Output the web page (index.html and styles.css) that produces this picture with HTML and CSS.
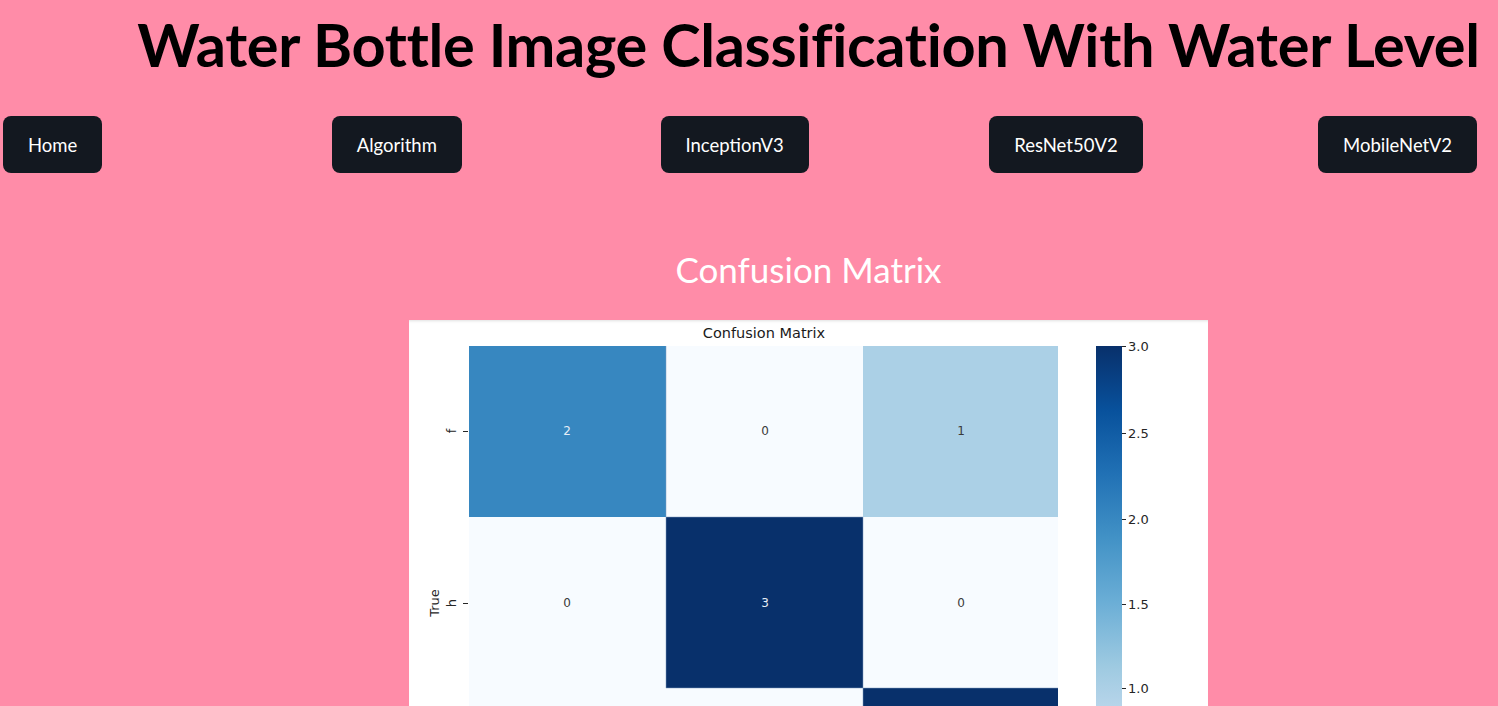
FILE: index.html
```html
<!DOCTYPE html>
<html lang="en">
<head>
<meta charset="utf-8">
<title>Water Bottle Image Classification With Water Level</title>
<link rel="stylesheet" href="styles.css">
</head>
<body>
<main class="app">
  <h1 class="title">Water Bottle Image Classification With Water Level</h1>
  <nav class="nav">
    <div class="nav-col"><button class="btn">Home</button></div>
    <div class="nav-col"><button class="btn">Algorithm</button></div>
    <div class="nav-col"><button class="btn">InceptionV3</button></div>
    <div class="nav-col"><button class="btn">ResNet50V2</button></div>
    <div class="nav-col"><button class="btn">MobileNetV2</button></div>
  </nav>
  <section class="content">
    <h2 class="section">Confusion Matrix</h2>
    <figure class="figure">
      <svg class="plot" width="799" height="386" viewBox="0 0 799 386" xmlns="http://www.w3.org/2000/svg">
        <defs>
          <linearGradient id="blues" x1="0" y1="1" x2="0" y2="0">
            <stop offset="0" stop-color="#f7fbff"/>
            <stop offset="0.125" stop-color="#deebf7"/>
            <stop offset="0.25" stop-color="#c6dbef"/>
            <stop offset="0.375" stop-color="#9ecae1"/>
            <stop offset="0.5" stop-color="#6baed6"/>
            <stop offset="0.625" stop-color="#4292c6"/>
            <stop offset="0.75" stop-color="#2171b5"/>
            <stop offset="0.875" stop-color="#08519c"/>
            <stop offset="1" stop-color="#08306b"/>
          </linearGradient>
        </defs>
        <text class="plot-title" x="355" y="18" text-anchor="middle">Confusion Matrix</text>
        <g class="cells">
          <rect x="60" y="26" width="197" height="171" fill="#3787c0"/>
          <rect x="257" y="26" width="197" height="171" fill="#f7fbff"/>
          <rect x="454" y="26" width="195" height="171" fill="#abd0e6"/>
          <rect x="60" y="197" width="197" height="171" fill="#f7fbff"/>
          <rect x="257" y="197" width="197" height="171" fill="#08306b"/>
          <rect x="454" y="197" width="195" height="171" fill="#f7fbff"/>
          <rect x="60" y="368" width="197" height="171" fill="#f7fbff"/>
          <rect x="257" y="368" width="197" height="171" fill="#f7fbff"/>
          <rect x="454" y="368" width="195" height="171" fill="#08306b"/>
        </g>
        <g class="cell-lines" stroke="#7f9cc0" stroke-width="1" stroke-opacity="0.5">
          <line x1="257" y1="197" x2="257" y2="368"/>
          <line x1="257" y1="197" x2="454" y2="197"/>
          <line x1="257" y1="368" x2="454" y2="368"/>
          <line x1="454" y1="197" x2="454" y2="368"/>
          <line x1="454" y1="368" x2="649" y2="368"/>
          <line x1="454" y1="368" x2="454" y2="539"/>
          <line x1="257" y1="26" x2="257" y2="197"/>
        </g>
        <g class="annot">
          <text x="158" y="115" class="on-dark">2</text>
          <text x="356" y="115" class="on-light">0</text>
          <text x="552" y="115" class="on-light">1</text>
          <text x="158" y="287" class="on-light">0</text>
          <text x="356" y="287" class="on-dark">3</text>
          <text x="552" y="287" class="on-light">0</text>
        </g>
        <g class="ticks" stroke="#262626" stroke-width="1">
          <line x1="54" y1="111.5" x2="59" y2="111.5"/>
          <line x1="54" y1="283.5" x2="59" y2="283.5"/>
          <line x1="713" y1="26.5" x2="717" y2="26.5"/>
          <line x1="713" y1="113.5" x2="717" y2="113.5"/>
          <line x1="713" y1="199.5" x2="717" y2="199.5"/>
          <line x1="713" y1="284.5" x2="717" y2="284.5"/>
          <line x1="713" y1="368.5" x2="717" y2="368.5"/>
        </g>
        <text class="tick-label" transform="translate(47 111) rotate(-90)" text-anchor="middle">f</text>
        <text class="tick-label" transform="translate(47 283) rotate(-90)" text-anchor="middle">h</text>
        <text class="axis-label" transform="translate(30 283) rotate(-90)" text-anchor="middle">True</text>
        <rect x="687" y="26" width="26" height="513" fill="url(#blues)"/>
        <g class="cbar-labels">
          <text x="719" y="31">3.0</text>
          <text x="719" y="118">2.5</text>
          <text x="719" y="204">2.0</text>
          <text x="719" y="289">1.5</text>
          <text x="719" y="373">1.0</text>
        </g>
      </svg>
    </figure>
  </section>
</main>
</body>
</html>
```

FILE: styles.css
```css
html, body {
  margin: 0;
  padding: 0;
}

body {
  background: #ff8ca8;
  overflow: hidden;
  font-family: "Lato", "Noto Sans", sans-serif;
}

.app {
  margin-left: 3px;
  display: flex;
  flex-direction: column;
}

.title {
  margin: 6px 0 0 0;
  padding-left: 116px;
  text-align: center;
  font-size: 59.5px;
  line-height: 76px;
  font-weight: 700;
  color: #000;
  letter-spacing: -0.3px;
  white-space: nowrap;
}

.nav {
  display: grid;
  grid-template-columns: repeat(4, 328.75px) 1fr;
  margin-top: 34px;
}

.nav-col {
  display: flex;
}

.btn {
  height: 57px;
  padding: 0 25px;
  border: none;
  border-radius: 8px;
  background: #131820;
  color: #fff;
  font-family: "Lato", "Noto Sans", sans-serif;
  font-size: 18.5px;
  font-weight: 400;
  cursor: pointer;
}

.content {
  padding-left: 116px;
  display: flex;
  flex-direction: column;
  align-items: center;
}

.section {
  margin: 73px 0 0 0;
  text-align: center;
  font-size: 35px;
  line-height: 46px;
  font-weight: 400;
  color: #fff;
}

.figure {
  margin: 28px 0 0 0;
  width: 799px;
  height: 386px;
  background: #fff;
  box-shadow: inset 0 3px 3px -2px rgba(0, 0, 0, 0.12);
}

.plot {
  display: block;
  font-family: "DejaVu Sans", sans-serif;
}

.plot-title {
  font-size: 14.5px;
  fill: #1a1a1a;
}

.annot text {
  font-size: 12px;
  text-anchor: middle;
}

.on-dark {
  fill: #e6eef7;
}

.on-light {
  fill: #3a3a3a;
}

.tick-label,
.axis-label {
  font-size: 13px;
  fill: #262626;
}

.cbar-labels text {
  font-size: 13px;
  fill: #262626;
}
```
